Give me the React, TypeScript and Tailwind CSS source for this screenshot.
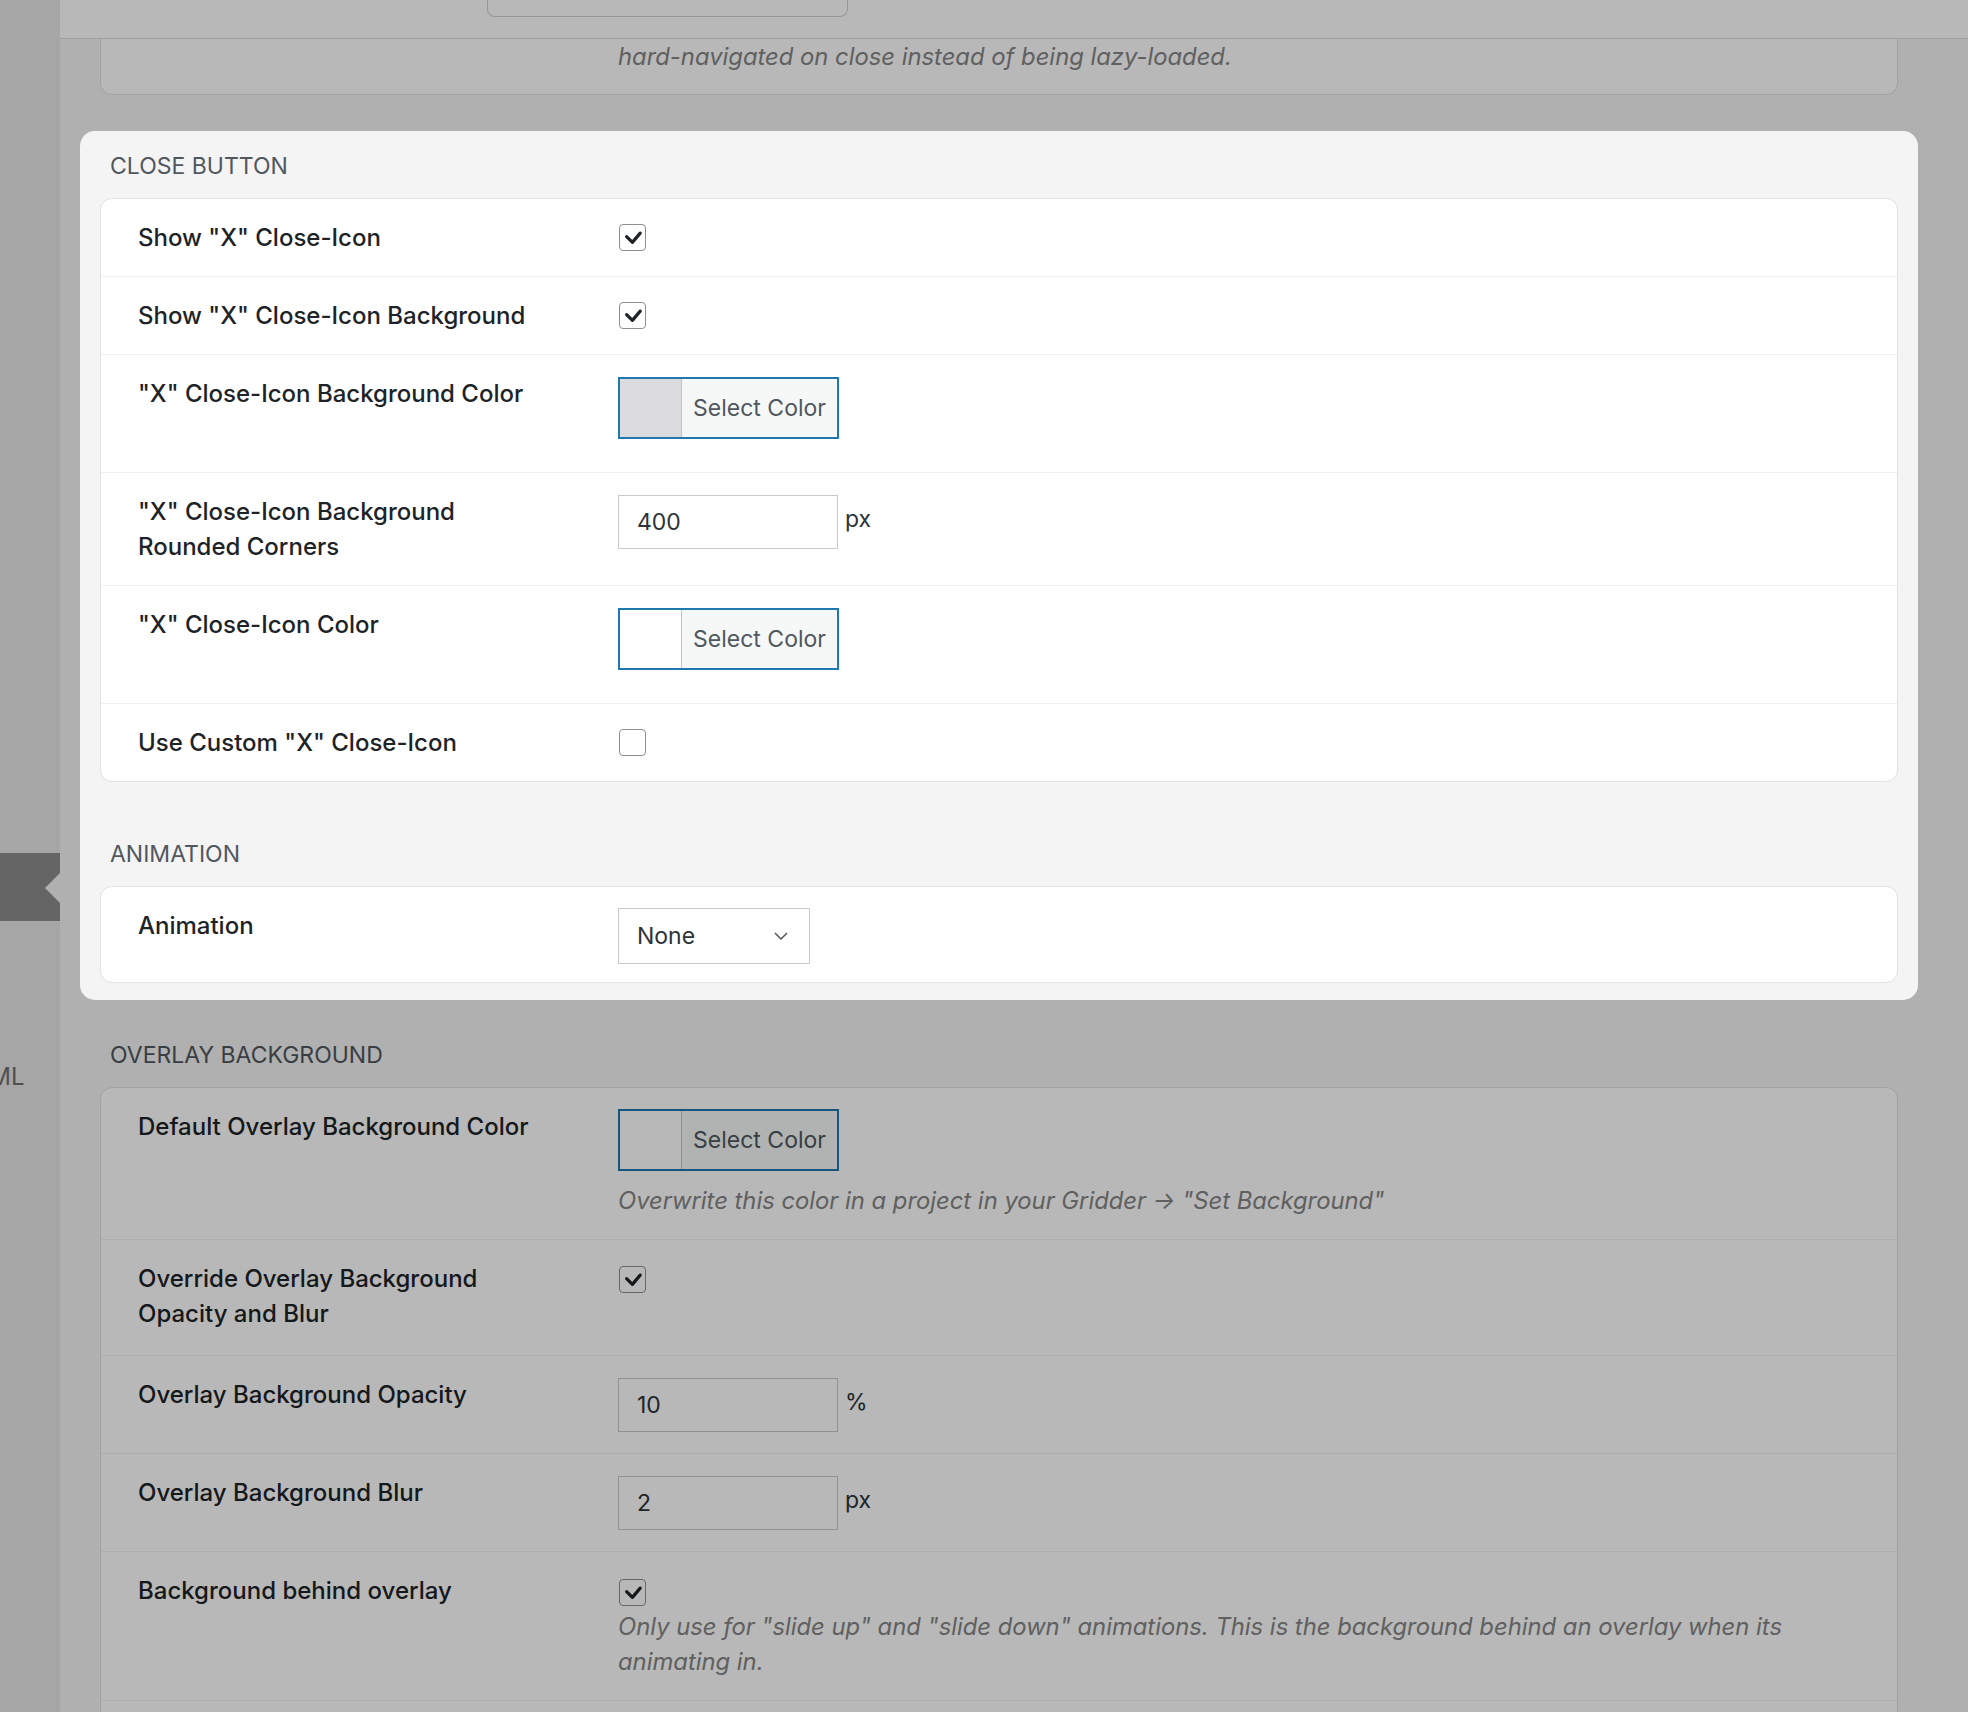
import type { ReactNode } from "react";

const FONT = "font-['Inter','Noto_Sans',sans-serif]";

function Checkbox({ checked }: { checked?: boolean }) {
  return (
    <span className="ml-[1px] flex h-[27px] w-[27px] items-center justify-center rounded-[4px] border-[1.5px] border-[#8c8f94] bg-white">
      {checked && (
        <svg width="24" height="24" viewBox="0 0 24 24">
          <path d="M5.6 10.6 L11.4 16.4 L19.2 7.1" fill="none" stroke="#1d2327" strokeWidth="3.2" strokeLinecap="round" strokeLinejoin="round" />
        </svg>
      )}
    </span>
  );
}

function ColorButton({ swatch }: { swatch: string }) {
  return (
    <div className="flex h-[62px] w-[221px] border-2 border-[#1f78b0] bg-[#f6f7f7]">
      <span className={`w-[62px] border-r border-[#c3c4c7] ${swatch}`} />
      <span className="flex flex-1 items-center justify-center text-[23px] text-[#50575e]">Select Color</span>
    </div>
  );
}

function NumberField({ value, unit }: { value: string; unit: string }) {
  return (
    <div className="flex items-start gap-[7px]">
      <div className="flex h-[54px] w-[220px] items-center border-[1.5px] border-[#c9c9cb] bg-white pl-[18px] text-[23px] text-[#2c3338]">
        {value}
      </div>
      <span className="pt-[7px] text-[23px] leading-[35px] text-[#2c3338]">{unit}</span>
    </div>
  );
}

function Description({ children, className = "" }: { children: ReactNode; className?: string }) {
  return <p className={`text-[23.8px] italic leading-[35px] text-[#858585] ${className}`}>{children}</p>;
}

function Row({ label, pad, children }: { label?: ReactNode; pad: string; children?: ReactNode }) {
  return (
    <div className="flex">
      <div className="w-[517px] shrink-0 py-[21px] pl-[37px] pr-[70px] text-[24px] font-medium leading-[35px] text-[#1d2327]">
        {label}
      </div>
      <div className={`flex-1 pr-[50px] ${pad}`}>{children}</div>
    </div>
  );
}

function Card({ children }: { children: ReactNode }) {
  return (
    <div className="divide-y divide-[#f0f0f1] overflow-hidden rounded-[12px] border border-[#e2e2e2] bg-white">
      {children}
    </div>
  );
}

function Heading({ children, className = "" }: { children: ReactNode; className?: string }) {
  return (
    <h2 className={`mb-[17px] h-[30px] pl-[10px] text-[23px] uppercase leading-[30px] text-[#50575e] ${className}`}>
      {children}
    </h2>
  );
}

const CHECK_PAD = "pt-[25px] pb-[21px]";
const FIELD_PAD = "pt-[22px] pb-[21px]";

export default function App() {
  return (
    <div className={`relative flex h-[1712px] w-[1968px] overflow-hidden bg-[#f4f4f4] ${FONT}`}>
      {/* admin menu, scrolled mostly out of view */}
      <aside className="w-[60px] shrink-0 overflow-hidden bg-[#e6e6e6] pt-[853px]">
        <div className="relative h-[68px] bg-[#8c8c8c]">
          <span className="absolute right-0 top-[20px] border-y-[15px] border-r-[15px] border-y-transparent border-r-[#f4f4f4]" />
        </div>
        <div className="-ml-[44px] mt-[141px] whitespace-nowrap text-[24px] leading-[30px] text-[#6e6e6e]">HTML</div>
      </aside>

      <main className="min-w-0 flex-1">
        <div className="h-[39px] border-b border-[#dcdcde] bg-white">
          <div className="ml-[427px] h-[17px] w-[361px] rounded-b-[8px] border-x border-b border-[#d0d0d0]" />
        </div>

        <div className="pl-[40px] pr-[70px]">
          <div className="rounded-b-[12px] border-x border-b border-[#e2e2e2] bg-white pb-[20px] pl-[517px]">
            <Description>hard-navigated on close instead of being lazy-loaded.</Description>
          </div>

          {/* highlighted group, sits above the dimming overlay */}
          <section className="relative z-20 -mx-[20px] mt-[36px] rounded-[15px] bg-[#f4f4f4] px-[20px] pb-[17px] pt-[20px]">
            <Heading>Close Button</Heading>
            <Card>
              <Row label={'Show "X" Close-Icon'} pad={CHECK_PAD}>
                <Checkbox checked />
              </Row>
              <Row label={'Show "X" Close-Icon Background'} pad={CHECK_PAD}>
                <Checkbox checked />
              </Row>
              <Row label={'"X" Close-Icon Background Color'} pad="pt-[22px] pb-[33px]">
                <ColorButton swatch="bg-[#dcdcde]" />
              </Row>
              <Row label={'"X" Close-Icon Background Rounded Corners'} pad={FIELD_PAD}>
                <NumberField value="400" unit="px" />
              </Row>
              <Row label={'"X" Close-Icon Color'} pad="pt-[22px] pb-[33px]">
                <ColorButton swatch="bg-white" />
              </Row>
              <Row label={'Use Custom "X" Close-Icon'} pad={CHECK_PAD}>
                <Checkbox />
              </Row>
            </Card>

            <Heading className="mt-[57px]">Animation</Heading>
            <Card>
              <Row label="Animation" pad="pt-[21px] pb-[18px]">
                <div className="flex h-[56px] w-[192px] items-center justify-between border-[1.5px] border-[#c9c9cb] bg-white pl-[18px] pr-[21px] text-[23px] text-[#2c3338]">
                  None
                  <svg width="14" height="8" viewBox="0 0 14 8">
                    <path d="M1 1 L7 7 L13 1" fill="none" stroke="#50575e" strokeWidth="1.5" />
                  </svg>
                </div>
              </Row>
            </Card>
          </section>

          <Heading className="mt-[40px]">Overlay Background</Heading>
          <Card>
            <Row label="Default Overlay Background Color" pad="pt-[21px] pb-[21px]">
              <ColorButton swatch="bg-white" />
              <Description className="mt-[12px]">Overwrite this color in a project in your Gridder → "Set Background"</Description>
            </Row>
            <Row label="Override Overlay Background Opacity and Blur" pad="min-h-[115px] pt-[26px]">
              <Checkbox checked />
            </Row>
            <Row label="Overlay Background Opacity" pad={FIELD_PAD}>
              <NumberField value="10" unit="%" />
            </Row>
            <Row label="Overlay Background Blur" pad={FIELD_PAD}>
              <NumberField value="2" unit="px" />
            </Row>
            <Row label="Background behind overlay" pad="pt-[27px] pb-[21px]">
              <Checkbox checked />
              <Description className="mt-[3px]">
                Only use for "slide up" and "slide down" animations. This is the background behind an overlay when its
                animating in.
              </Description>
            </Row>
            <Row pad={CHECK_PAD} />
          </Card>
        </div>
      </main>

      <div className="pointer-events-none absolute inset-0 z-10 bg-black/[0.28]" />
    </div>
  );
}
